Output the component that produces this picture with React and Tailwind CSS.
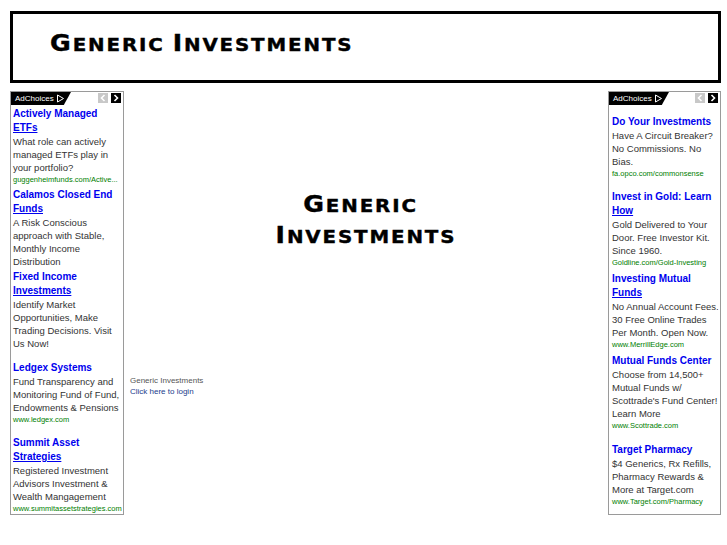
import React from "react";

const leftAds = [
  { mt: "mt-[3px]", title: ["Actively Managed", "ETFs"], body: ["What role can actively", "managed ETFs play in", "your portfolio?"], url: "guggenheimfunds.com/Active..." },
  { mt: "mt-[3px]", title: ["Calamos Closed End", "Funds"], body: ["A Risk Conscious", "approach with Stable,", "Monthly Income", "Distribution"], url: null },
  { mt: "mt-[2px]", title: ["Fixed Income", "Investments"], body: ["Identify Market", "Opportunities, Make", "Trading Decisions. Visit", "Us Now!"], url: null },
  { mt: "mt-[11px]", title: ["Ledgex Systems"], body: ["Fund Transparency and", "Monitoring Fund of Fund,", "Endowments & Pensions"], url: "www.ledgex.com" },
  { mt: "mt-[11px]", title: ["Summit Asset", "Strategies"], body: ["Registered Investment", "Advisors Investment &", "Wealth Mangagement"], url: "www.summitassetstrategies.com" },
];

const rightAds = [
  { mt: "mt-[11px]", title: ["Do Your Investments"], body: ["Have A Circuit Breaker?", "No Commissions. No", "Bias."], url: "fa.opco.com/commonsense" },
  { mt: "mt-[11px]", title: ["Invest in Gold: Learn", "How"], body: ["Gold Delivered to Your", "Door. Free Investor Kit.", "Since 1960."], url: "Goldline.com/Gold-Investing" },
  { mt: "mt-[4px]", title: ["Investing Mutual", "Funds"], body: ["No Annual Account Fees.", "30 Free Online Trades", "Per Month. Open Now."], url: "www.MerrillEdge.com" },
  { mt: "mt-[4px]", title: ["Mutual Funds Center"], body: ["Choose from 14,500+", "Mutual Funds w/", "Scottrade's Fund Center!", "Learn More"], url: "www.Scottrade.com" },
  { mt: "mt-[12px]", title: ["Target Pharmacy"], body: ["$4 Generics, Rx Refills,", "Pharmacy Rewards &", "More at Target.com"], url: "www.Target.com/Pharmacy" },
];

function AdBar() {
  return (
    <div className="relative flex h-[13px] items-start border-t border-[#9a9a9a]">
      <div className="flex h-[13px] w-[60px] items-center bg-black pl-[4px] text-[8px] leading-none text-white [clip-path:polygon(0_0,100%_0,88%_100%,0_100%)]">
        <span>AdChoices</span>
        <svg width="9" height="9" viewBox="0 0 9 9" className="ml-[2px]">
          <path d="M1.5 1 L7.5 4.5 L1.5 8 Z" fill="none" stroke="white" strokeWidth="1" />
        </svg>
      </div>
      <div className="ml-auto mr-[2px] mt-[1px] flex gap-[3px]">
        <div className="flex h-[10px] w-[10px] items-center justify-center bg-[#c8c8c8]">
          <svg width="6" height="8" viewBox="0 0 6 8">
            <path d="M4.5 1 L1.5 4 L4.5 7" fill="none" stroke="white" strokeWidth="1.6" />
          </svg>
        </div>
        <div className="flex h-[10px] w-[10px] items-center justify-center bg-black">
          <svg width="6" height="8" viewBox="0 0 6 8">
            <path d="M1.5 1 L4.5 4 L1.5 7" fill="none" stroke="white" strokeWidth="1.6" />
          </svg>
        </div>
      </div>
    </div>
  );
}

function Ad({ ad }) {
  return (
    <div className={ad.mt}>
      <div className="text-[10px] font-bold leading-[14px] text-[#0000ee]">
        {ad.title.map((t, i) => (
          <div key={i} className={"whitespace-nowrap " + (ad.title.length > 1 && i === ad.title.length - 1 ? "underline" : "")}>
            {t}
          </div>
        ))}
      </div>
      <div className="text-[9.5px] leading-[13px] text-[#333333]">
        {ad.body.map((b, i) => (
          <div key={i} className="whitespace-nowrap">{b}</div>
        ))}
      </div>
      {ad.url && <div className="whitespace-nowrap text-[7.5px] leading-[11px] text-[#008000]">{ad.url}</div>}
    </div>
  );
}

function AdColumn({ ads, width, pad }) {
  return (
    <div className={"flex h-[424px] flex-col border-x border-b border-[#9a9a9a] " + width}>
      <AdBar />
      <div className={pad}>
        {ads.map((a, i) => (
          <Ad key={i} ad={a} />
        ))}
      </div>
    </div>
  );
}

function Word({ w }) {
  return (
    <span className="whitespace-nowrap">
      <span className="text-[23px]">{w[0]}</span>
      <span className="text-[18px]">{w.slice(1).toUpperCase()}</span>
    </span>
  );
}

export default function App() {
  return (
    <div className="h-[545px] w-[727px] bg-white font-['Liberation_Sans',Arial,sans-serif]">
      <div className="pt-[11px] pl-[10px] pr-[6px]">
        <div className="flex h-[72px] items-start border-[3px] border-black pl-[37px] pt-[17px]">
          <h1 className="origin-left scale-x-[1.1] font-['DejaVu_Sans',sans-serif] font-bold leading-[24px] tracking-[1.7px] text-black [-webkit-text-stroke:0.4px_black]">
            <Word w="Generic" /> <Word w="Investments" />
          </h1>
        </div>
      </div>
      <div className="mt-[8px] flex pl-[10px] pr-[6px]">
        <AdColumn ads={leftAds} width="w-[114px]" pad="pl-[2px]" />
        <div className="flex flex-1 flex-col">
          <div className="mt-[99px] scale-x-[1.1] text-center font-['DejaVu_Sans',sans-serif] font-bold leading-[28px] tracking-[1.7px] text-black [-webkit-text-stroke:0.4px_black]">
            <div className="pr-[10px]"><Word w="Generic" /></div>
            <div><Word w="Investments" /></div>
          </div>
          <div className="mt-[123px] pl-[6px] text-[8px] leading-[11px]">
            <div className="text-[#555555]">Generic Investments</div>
            <div className="text-[#1a3c8c]">Click here to login</div>
          </div>
        </div>
        <AdColumn ads={rightAds} width="w-[113px]" pad="pl-[3px]" />
      </div>
    </div>
  );
}
